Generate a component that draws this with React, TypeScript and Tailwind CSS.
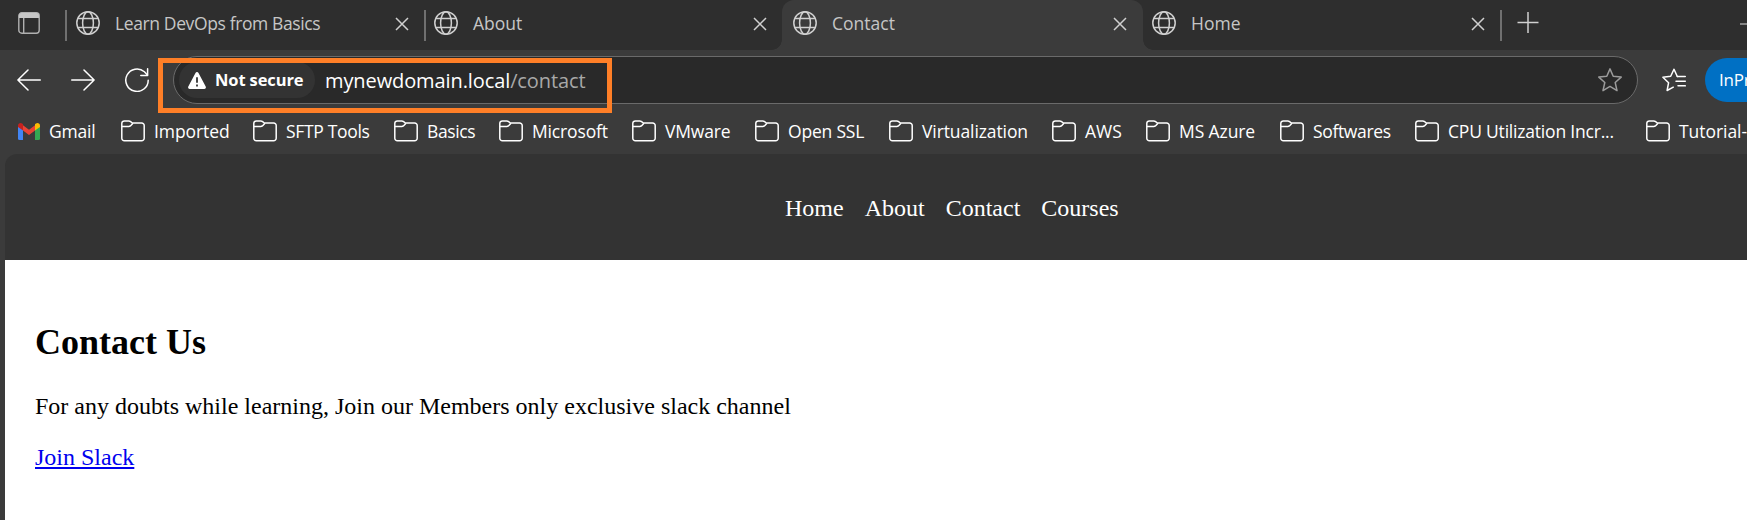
import React from "react";

type IconProps = { className?: string };

function Globe() {
  return (
    <svg width="24" height="24" viewBox="0 0 24 24" fill="none" stroke="#d0d0d0" strokeWidth="1.5" className="shrink-0">
      <circle cx="12" cy="12" r="11.2" />
      <ellipse cx="12" cy="12" rx="5.4" ry="11.2" />
      <path d="M2 7.6h20M2 16.4h20" />
    </svg>
  );
}

function Close() {
  return (
    <svg width="14" height="14" viewBox="0 0 14 14" fill="none" stroke="#d0d0d0" strokeWidth="1.5" className="shrink-0">
      <path d="M1 1l12 12M13 1L1 13" />
    </svg>
  );
}

function Folder() {
  return (
    <svg width="24" height="22" viewBox="0 0 24 22" fill="none" stroke="#fff" strokeWidth="1.5" strokeLinejoin="round" className="shrink-0">
      <path d="M.8 3.4A2.5 2.5 0 0 1 3.3.9h4.5c.7 0 1.300.3 1.800.7l1.700 1.400h9.300a2.600 2.600 0 0 1 2.600 2.600v12.600a2.600 2.600 0 0 1-2.600 2.600H3.400a2.600 2.600 0 0 1-2.600-2.600z" />
      <path d="M.8 6.500h7c.6 0 1.100-.2 1.600-.6L12 3.200" />
    </svg>
  );
}

function Gmail() {
  return (
    <svg width="22" height="17" viewBox="0 0 22 17" className="shrink-0">
      <path d="M0 3v12.500A1.500 1.500 0 0 0 1.500 17H5V6.500z" fill="#4285f4" />
      <path d="M22 3v12.500a1.500 1.500 0 0 1-1.500 1.500H17V6.500z" fill="#34a853" />
      <path d="M5 2.200l6 4.600 6-4.600v5.300l-6 4.600-6-4.600z" fill="#ea4335" />
      <path d="M0 4V2.600C0 .5 2.400-.7 4.100.6L5 1.300v6.300L0 4z" fill="#c5221f" />
      <path d="M22 4V2.600c0-2.100-2.400-3.300-4.100-2l-.9.700v6.300L22 4z" fill="#fbbc04" />
    </svg>
  );
}

function Arrow({ className = "" }: IconProps) {
  return (
    <svg width="24" height="22" viewBox="0 0 24 22" fill="none" stroke="#fff" strokeWidth="1.500" strokeLinecap="round" strokeLinejoin="round" className={`shrink-0 ${className}`}>
      <path d="M23.300 11H.9M11 1L.9 11 11 21" />
    </svg>
  );
}

function Reload() {
  return (
    <svg width="24" height="24" viewBox="0 0 24 24" fill="none" stroke="#fff" strokeWidth="1.500" strokeLinecap="round" strokeLinejoin="round" className="ml-[30px] shrink-0">
      <path d="M23.200 12.200A11.200 11.200 0 1 1 19.400 3.800L22.400 7" />
      <path d="M22.600.8v6.700H15.800" />
    </svg>
  );
}

function Star() {
  return (
    <svg width="24" height="24" viewBox="0 0 24 24" fill="none" stroke="#9b9b9b" strokeWidth="1.500" strokeLinejoin="round" className="shrink-0">
      <path d="M12 .9l3.200 7.400 8 .8-6 5.400 1.800 8.100-7-4.200-7 4.200 1.800-8.100-6-5.400 8-.8z" />
    </svg>
  );
}

function Favorites() {
  return (
    <svg width="24" height="24" viewBox="0 0 24 24" fill="none" stroke="#fff" strokeWidth="1.500" strokeLinejoin="round" strokeLinecap="round" className="ml-[24px] shrink-0">
      <path d="M15.300 8.500L12 1.200 8.700 8.300.9 9.200l5.700 5.500-1.500 7.800 6.200-3.300" />
      <path d="M15.300 8.500h8M14 13.200h9.300M16 17.800h7.300" />
    </svg>
  );
}

const tabs = [
  { title: "Learn DevOps from Basics", box: "w-[359px] pl-[9px] pr-[15px] border-l-2 border-[#707070]", text: "tracking-[-0.38px]" },
  { title: "About", box: "w-[358px] pl-[8px] pr-[15px] border-l-2 border-[#707070]", text: "" },
  { title: "Contact", box: "w-[361px] pl-[11px] pr-[16px]", text: "" },
  { title: "Home", box: "w-[357px] pl-[9px] pr-[15px]", text: "" },
];

const bookmarks = [
  { name: "Imported", box: "w-[132px]", text: "tracking-[-0.08px]" },
  { name: "SFTP Tools", box: "w-[141px]", text: "tracking-[-0.32px]" },
  { name: "Basics", box: "w-[105px]", text: "tracking-[-0.4px]" },
  { name: "Microsoft", box: "w-[133px]", text: "tracking-[-0.15px]" },
  { name: "VMware", box: "w-[123px]", text: "tracking-[-0.15px]" },
  { name: "Open SSL", box: "w-[134px]", text: "tracking-[-0.2px]" },
  { name: "Virtualization", box: "w-[163px]", text: "tracking-[-0.1px]" },
  { name: "AWS", box: "w-[94px]", text: "" },
  { name: "MS Azure", box: "w-[134px]", text: "tracking-[-0.1px]" },
  { name: "Softwares", box: "w-[135px]", text: "tracking-[-0.35px]" },
  { name: "CPU Utilization Incr...", box: "w-[231px]", text: "tracking-[-0.2px]" },
  { name: "Tutorial-Linux", box: "w-[160px]", text: "tracking-[-0.05px]" },
];

function TabStrip() {
  return (
    <div className="flex h-[50px] bg-[#2e2e2e] text-[#c6c6c6]">
      <div className="flex w-[65px] shrink-0 items-start pt-[12px] pl-[18px]">
        <svg width="22" height="22" viewBox="0 0 22 22" fill="none">
          <rect x=".8" y=".8" width="20.400" height="20.400" rx="3" stroke="#b0b0b0" strokeWidth="1.400" />
          <path d="M1 6V3.500A2.500 2.500 0 0 1 3.500 1h15A2.500 2.500 0 0 1 21 3.500V6z" fill="#c6c6c6" />
          <path d="M5.700 6v15" stroke="#b0b0b0" strokeWidth="1.400" />
        </svg>
      </div>
      {tabs.map((t) => {
        const active = t.title === "Contact";
        return (
          <div key={t.title} className={`relative shrink-0 pt-[10px] ${active ? "z-10 h-[50px] rounded-t-[12px] bg-[#3b3b3b]" : ""}`}>
            {active && (
              <>
                <div className="absolute bottom-0 -left-[10px] h-[10px] w-[10px] bg-[radial-gradient(circle_at_0_0,#2e2e2e_9.5px,#3b3b3b_10px)]" />
                <div className="absolute -right-[10px] bottom-0 h-[10px] w-[10px] bg-[radial-gradient(circle_at_100%_0,#2e2e2e_9.5px,#3b3b3b_10px)]" />
              </>
            )}
            <div className={`flex h-[31px] items-start pt-[1px] ${t.box}`}>
              <Globe />
              <span className={`ml-[15px] flex-1 text-[17.5px] leading-[24px] whitespace-nowrap ${t.text}`}>{t.title}</span>
              <div className="pt-[6px]"><Close /></div>
            </div>
          </div>
        );
      })}
      <div className="mt-[10px] h-[31px] w-[2px] shrink-0 bg-[#707070]" />
      <svg width="22" height="22" viewBox="0 0 22 22" stroke="#d0d0d0" strokeWidth="1.500" className="mt-[12px] ml-[15px] shrink-0">
        <path d="M.5 10.500h21M11 0v21" />
      </svg>
      <div className="mt-[23px] ml-auto h-[2px] w-[7px] bg-[#858585]" />
    </div>
  );
}

function Toolbar() {
  return (
    <div className="relative flex h-[60px] items-center pl-[17px]">
      <Arrow />
      <Arrow className="ml-[30px] rotate-180" />
      <Reload />
      <div className="ml-[24px] flex h-[48px] w-[1465px] shrink-0 items-center rounded-full border border-[#6a6a6a] bg-[#292929] pr-[15px] pl-[5px]">
        <div className="flex h-[36px] w-[136px] shrink-0 items-center rounded-full bg-[#333] pl-[9px]">
          <svg width="18" height="17" viewBox="0 0 18 17">
            <path d="M7.500.9a1.700 1.700 0 0 1 3 0l7.200 13.600A1.700 1.700 0 0 1 16.200 17H1.800a1.700 1.700 0 0 1-1.500-2.500z" fill="#fff" />
            <path d="M9 5.300v5.500M9 12.500v2" stroke="#333" strokeWidth="1.800" />
          </svg>
          <span className="ml-[9px] text-[16.5px] leading-[24px] font-bold tracking-[-0.12px] whitespace-nowrap text-white">Not secure</span>
        </div>
        <span className="ml-[10px] flex-1 pt-[2px] text-[20px] leading-[26px] tracking-[-0.1px] whitespace-nowrap text-white">
          mynewdomain.local<span className="text-[#a8a8a8]">/contact</span>
        </span>
        <Star />
      </div>
      <Favorites />
      <div className="ml-[19px] flex h-[44px] w-[140px] shrink-0 items-center rounded-full bg-[#0070c4] pl-[14px] text-[17px] tracking-[-0.2px] text-white">InPrivate</div>
      <div className="absolute top-[8px] left-[158px] h-[55px] w-[454px] border-5 border-[#ff7f27]" />
    </div>
  );
}

function BookmarksBar() {
  return (
    <div className="flex h-[44px] items-center pb-[2px] pl-[18px] text-[17.5px] leading-[24px] text-white">
      <div className="flex w-[103px] shrink-0 items-center gap-[9px]">
        <Gmail />
        <span className="tracking-[-0.2px]">Gmail</span>
      </div>
      {bookmarks.map((b) => (
        <div key={b.name} className={`flex shrink-0 items-center gap-[9px] whitespace-nowrap ${b.box}`}>
          <Folder />
          <span className={b.text}>{b.name}</span>
        </div>
      ))}
    </div>
  );
}

export default function App() {
  return (
    <div className="h-[520px] w-[1747px] overflow-hidden bg-[#3b3b3b] font-['Open_Sans','Noto_Sans',sans-serif]">
      <TabStrip />
      <Toolbar />
      <BookmarksBar />
      <main className="ml-[5px] font-['Liberation_Serif',serif] text-[24px] leading-[27px] text-black">
        <nav className="flex h-[106px] gap-[21px] rounded-tl-[12px] bg-[#333] pt-[41px] pl-[780px] text-white">
          <a>Home</a>
          <a>About</a>
          <a>Contact</a>
          <a>Courses</a>
        </nav>
        <section className="h-[260px] bg-white px-[30px] pt-[61px]">
          <h2 className="text-[36px] leading-[42px] font-bold">Contact Us</h2>
          <p className="mt-[30px]">For any doubts while learning, Join our Members only exclusive slack channel</p>
          <p className="mt-[24px]">
            <a className="text-[#0000ee] underline decoration-2 underline-offset-2">Join Slack</a>
          </p>
        </section>
      </main>
    </div>
  );
}
